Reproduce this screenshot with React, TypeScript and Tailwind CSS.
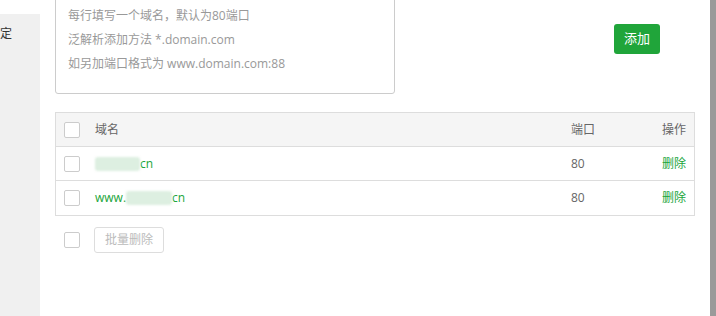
import React from 'react';

const FONT = "font-['Open_Sans','Noto_Sans_CJK_SC',sans-serif]";

function Check() {
  return <span className="block w-4 h-4 rounded-[2px] border border-[#cccccc] bg-white flex-shrink-0" />;
}

// blurred domain fragment
function Blur({ w }: { w: number }) {
  return <span className="inline-block h-[14px] bg-[#ddefe1] rounded-[3px] blur-[1px] align-middle" style={{ width: w }} />;
}

export default function App() {
  const rows = [
    { pre: '', blur: 45, port: 80 },
    { pre: 'www.', blur: 46, port: 80 },
  ];

  return (
    <div className={`${FONT} w-[716px] h-[316px] overflow-hidden bg-white flex text-[12px]`}>
      {/* ── left settings column (cut off) ─────────────────────────── */}
      <div className="w-10 flex flex-col">
        <div className="h-[14px] bg-white" />
        <div className="flex-1 bg-[#f0f0f0] relative">
          <span className="absolute left-0 top-[14px] text-[12px] leading-none text-[#333]">定</span>
        </div>
      </div>

      {/* ── main panel ─────────────────────────────────────────────── */}
      <div className="flex-1 px-[15px]">
        <div className="flex items-start">
          <div className="-mt-2 w-[340px] h-[102px] border border-[#cccccc] rounded-[3px] px-[12px] pt-[11px] text-[#999] leading-[24px]">
            <p>每行填写一个域名，默认为80端口</p>
            <p>泛解析添加方法 *.domain.com</p>
            <p>如另加端口格式为 www.domain.com:88</p>
          </div>
          <button className="ml-[219px] mt-[24px] w-[46px] h-[30px] rounded-[3px] bg-[#20a53a] text-white text-[13px]">
            添加
          </button>
        </div>

        <div className="mt-[18px] border border-[#dddddd]">
          <div className="h-[34px] bg-[#f5f5f5] border-b border-[#dddddd] flex items-center pl-[8px] pr-[8px] text-[#666]">
            <Check />
            <span className="ml-[15px] flex-1">域名</span>
            <span className="w-[85px]">端口</span>
            <span className="w-[30px] text-right">操作</span>
          </div>
          {rows.map((r, i) => (
            <div
              key={i}
              className={`h-[34px] flex items-center pl-[8px] pr-[8px] text-[#666] ${i < rows.length - 1 ? 'border-b border-[#dddddd]' : 'h-[33px]'}`}
            >
              <Check />
              <span className="ml-[15px] flex-1 text-[#20a53a] flex items-center">
                {r.pre}
                <Blur w={r.blur} />
                cn
              </span>
              <span className="w-[85px]">{r.port}</span>
              <span className="w-[30px] text-right text-[#20a53a]">删除</span>
            </div>
          ))}
        </div>

        <div className="mt-[11px] flex items-center pl-[9px]">
          <Check />
          <button className="ml-[14px] w-[70px] h-[26px] border border-[#dddddd] rounded-[3px] text-[#bbbbbb] text-[12px]">
            批量删除
          </button>
        </div>
      </div>

      {/* ── scrollbar edge ─────────────────────────────────────────── */}
      <div className="w-[6px] bg-[#9a9a9a]" />
    </div>
  );
}
